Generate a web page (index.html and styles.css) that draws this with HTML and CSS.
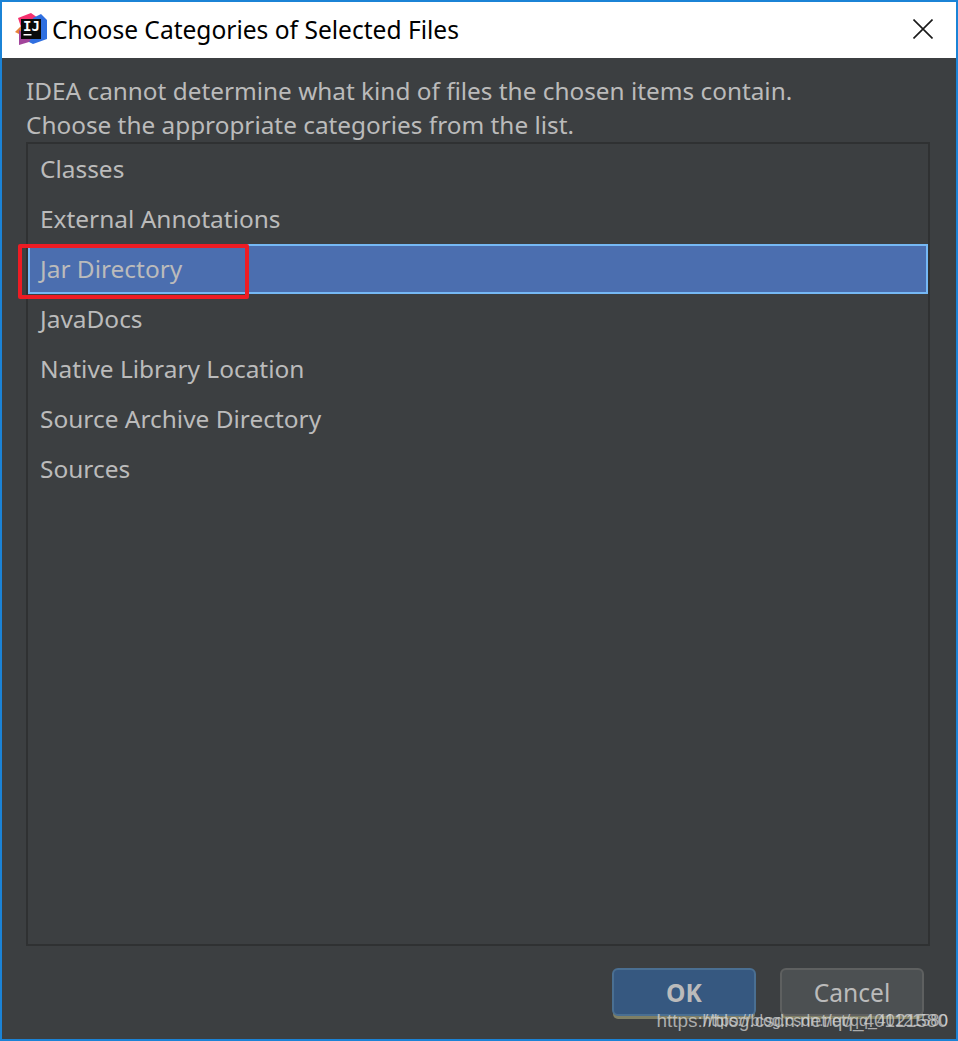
FILE: index.html
```html
<!DOCTYPE html>
<html lang="en">
<head>
<meta charset="utf-8">
<title>Choose Categories of Selected Files</title>
<link rel="stylesheet" href="styles.css">
</head>
<body>
<div class="window">
  <header class="titlebar">
    <svg class="logo" width="34" height="34" viewBox="0 0 34 34">
      <path d="M3 5 L16 0 L23 5 L20 19 L8 20 Z" fill="#f5316f"/>
      <path d="M18 5 L26 1 L32 7 L32 26 L18 31 L12 28 Z" fill="#2f6fe0"/>
      <path d="M0 19 L6 13 L8 21 L4 21 Z" fill="#e8813a"/>
      <path d="M4 17 L16 26 L14 29 L4 32 Z" fill="#a2459b"/>
      <rect x="6" y="6" width="20" height="20" fill="#0a0a0a"/>
      <rect x="8.5" y="21" width="8" height="1.5" fill="#fff"/>
      <text class="logo-text" x="8" y="18">IJ</text>
    </svg>
    <span class="title">Choose Categories of Selected Files</span>
    <svg class="close" width="20" height="20" viewBox="0 0 20 20">
      <path d="M0.5 0.5 L19.5 19.5 M19.5 0.5 L0.5 19.5" stroke="#1a1a1a" stroke-width="1.6" fill="none"/>
    </svg>
  </header>
  <main class="content">
    <p class="message">IDEA cannot determine what kind of files the chosen items contain.<br>Choose the appropriate categories from the list.</p>
    <ul class="list">
      <li class="item">Classes</li>
      <li class="item">External Annotations</li>
      <li class="item selected">Jar Directory</li>
      <li class="item">JavaDocs</li>
      <li class="item">Native Library Location</li>
      <li class="item">Source Archive Directory</li>
      <li class="item">Sources</li>
    </ul>
    <footer class="actions">
      <button class="btn primary">OK</button>
      <button class="btn">Cancel</button>
    </footer>
  </main>
  <div class="highlight"></div>
  <div class="watermark"><span class="mark-large">https://blog.csdn.net/qq_40121580</span><span class="mark-small">https://blog.csdn.net/qq_40121580</span></div>
</div>
</body>
</html>
```

FILE: styles.css
```css
* { box-sizing: border-box; }
html, body { margin: 0; padding: 0; }
body { width: 958px; height: 1041px; overflow: hidden; font-family: "Noto Sans", sans-serif; }
.window {
  position: relative;
  width: 958px;
  height: 1041px;
  border: 2px solid #1b83d6;
  display: flex;
  flex-direction: column;
  background: #3c3f41;
}
.titlebar {
  height: 56px;
  flex: none;
  background: #fff;
  display: flex;
  align-items: center;
  padding: 0 23px 2px 13px;
  color: #000;
}
.logo { flex: none; margin-top: 2px; }
.logo-text { font: bold 14px "DejaVu Sans Mono", monospace; fill: #fff; }
.title { font-size: 24.55px; margin-left: 3px; flex: 1; }
.close { flex: none; }
.content {
  flex: 1;
  min-height: 0;
  display: flex;
  flex-direction: column;
  padding: 0 26px 0 24px;
  color: #bbbbbb;
}
.message {
  margin: 0;
  padding-top: 16px;
  font-size: 24.35px;
  line-height: 34px;
  height: 84px;
  white-space: nowrap;
}
.list {
  list-style: none;
  margin: 0;
  padding: 0;
  height: 804px;
  flex: none;
  border: 2px solid #2f3132;
}
.item {
  height: 50px;
  line-height: 49px;
  padding-left: 12px;
  font-size: 24.45px;
}
.selected {
  background: #4b6eaf;
  border: 2px solid #75b8f5;
  padding-left: 10px;
  line-height: 46px;
}
.actions {
  display: flex;
  justify-content: flex-end;
  gap: 24px;
  padding: 22px 6px 0 0;
}
.btn {
  width: 144px;
  height: 48px;
  border: 2px solid #5e6060;
  border-radius: 6px;
  background: #4c5052;
  color: #bbbbbb;
  font: 24.6px "Noto Sans", sans-serif;
  box-shadow: 0 4px 0 -1px #7f7f65;
  padding: 0;
}
.primary {
  background: #365880;
  border-color: #4a6f92;
  font-weight: bold;
}
.highlight {
  position: absolute;
  left: 16px;
  top: 242px;
  width: 231px;
  height: 55px;
  border: 4px solid #ed1c24;
  border-radius: 2px;
}
.watermark {
  position: absolute;
  right: 8px;
  top: 1009px;
  width: 300px;
  height: 20px;
  line-height: 20px;
  font-family: "Liberation Sans", sans-serif;
  color: rgba(215,215,215,0.72);
  white-space: nowrap;
}
.mark-large, .mark-small { position: absolute; right: 0; top: 0; }
.mark-large { font-size: 19px; }
.mark-small { font-size: 16px; }
```
